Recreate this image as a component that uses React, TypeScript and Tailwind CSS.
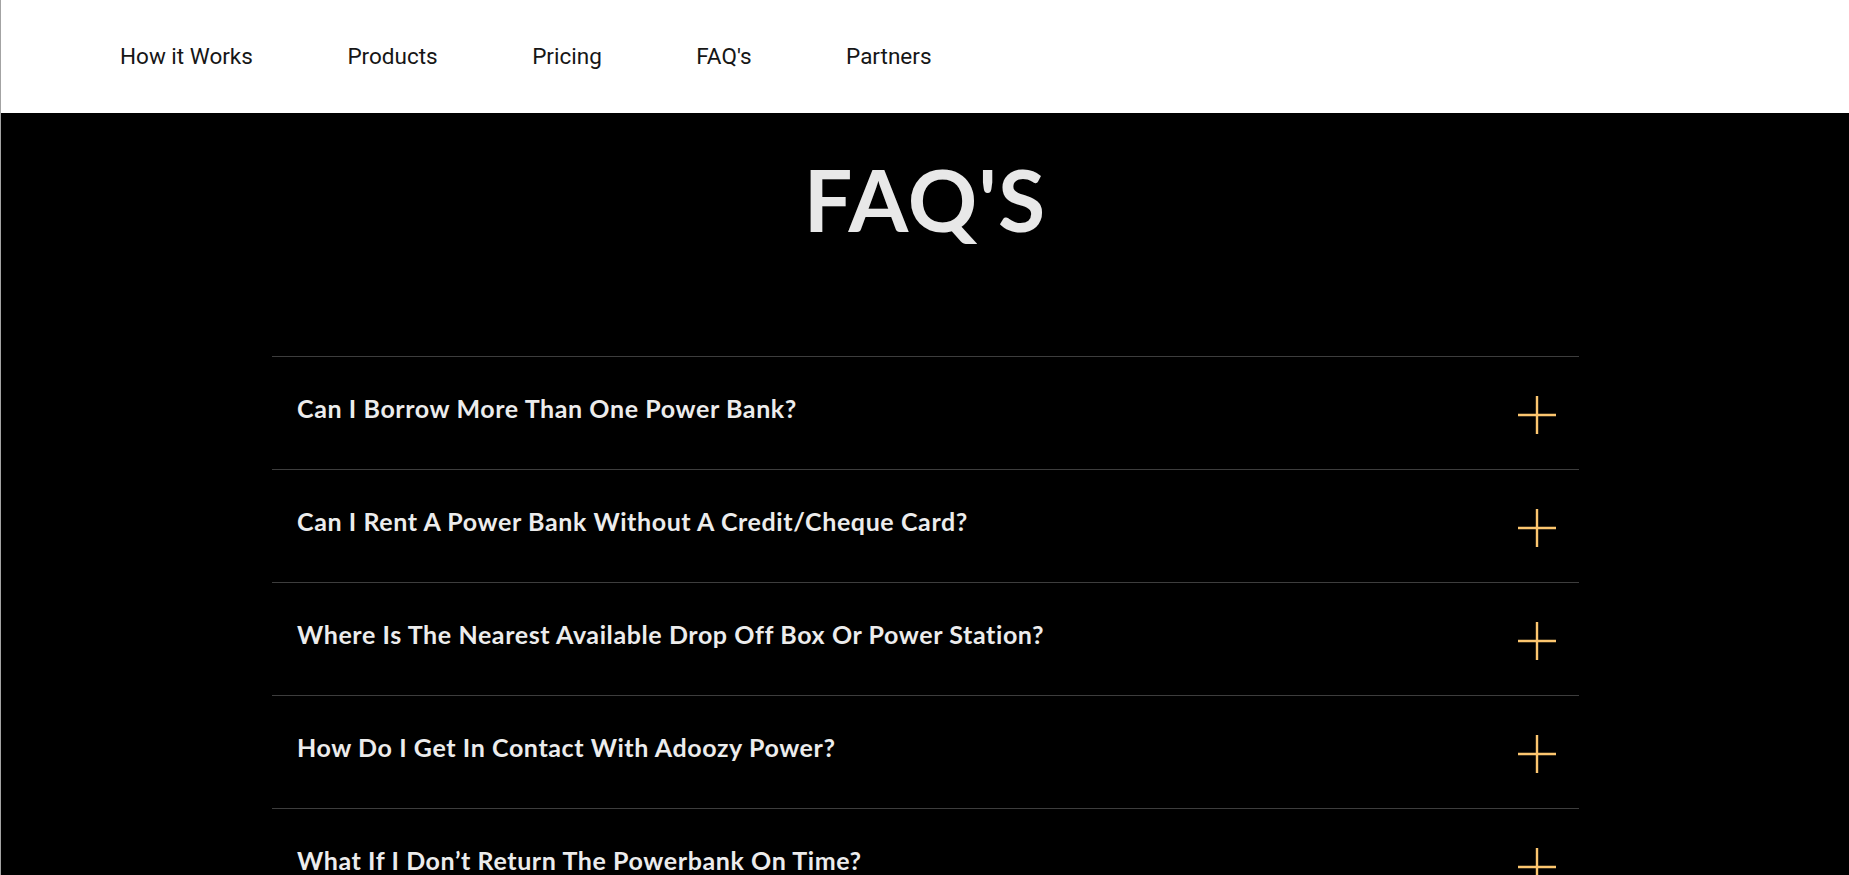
import React from "react";

const links = ["How it Works", "Products", "Pricing", "FAQ's", "Partners"];

const faqs = [
  "Can I Borrow More Than One Power Bank?",
  "Can I Rent A Power Bank Without A Credit/Cheque Card?",
  "Where Is The Nearest Available Drop Off Box Or Power Station?",
  "How Do I Get In Contact With Adoozy Power?",
  "What If I Don\u2019t Return The Powerbank On Time?",
];

function Plus() {
  return (
    <svg width="38" height="38" viewBox="0 0 38 38" className="shrink-0">
      <path d="M19 0V38M0 19H38" stroke="#fcc66f" strokeWidth="2.4" />
    </svg>
  );
}

export default function App() {
  return (
    <div className="min-h-screen bg-black border-l border-[#a3a3a3] font-['Lato',sans-serif]">
      {/* Top nav */}
      <header className="h-[113px] bg-white flex items-center pl-[119px]">
        <nav className="flex items-center gap-[94.5px] font-['Roboto',sans-serif] text-[22.5px] text-[#161616]">
          {links.map((l) => (
            <a key={l} href="#" className="leading-none">
              {l}
            </a>
          ))}
        </nav>
      </header>

      {/* FAQ */}
      <section className="bg-black pt-[34px]">
        <h2 className="text-center text-[86px] font-bold leading-[1.2] text-[#e8e8e8] tracking-[0.015em]">
          FAQ'S
        </h2>

        <div className="w-[1308px] mx-auto mt-[106px] pl-[1px]">
          {faqs.map((q) => (
            <div
              key={q}
              className="h-[113px] border-t border-[#3d3d3d] flex items-center justify-between pl-[25px] pr-[23px]"
            >
              <span className="text-[25px] font-bold tracking-[0.6px] text-[#ececec] mb-[8px]">{q}</span>
              <div className="mt-[3px]">
                <Plus />
              </div>
            </div>
          ))}
        </div>
      </section>
    </div>
  );
}
